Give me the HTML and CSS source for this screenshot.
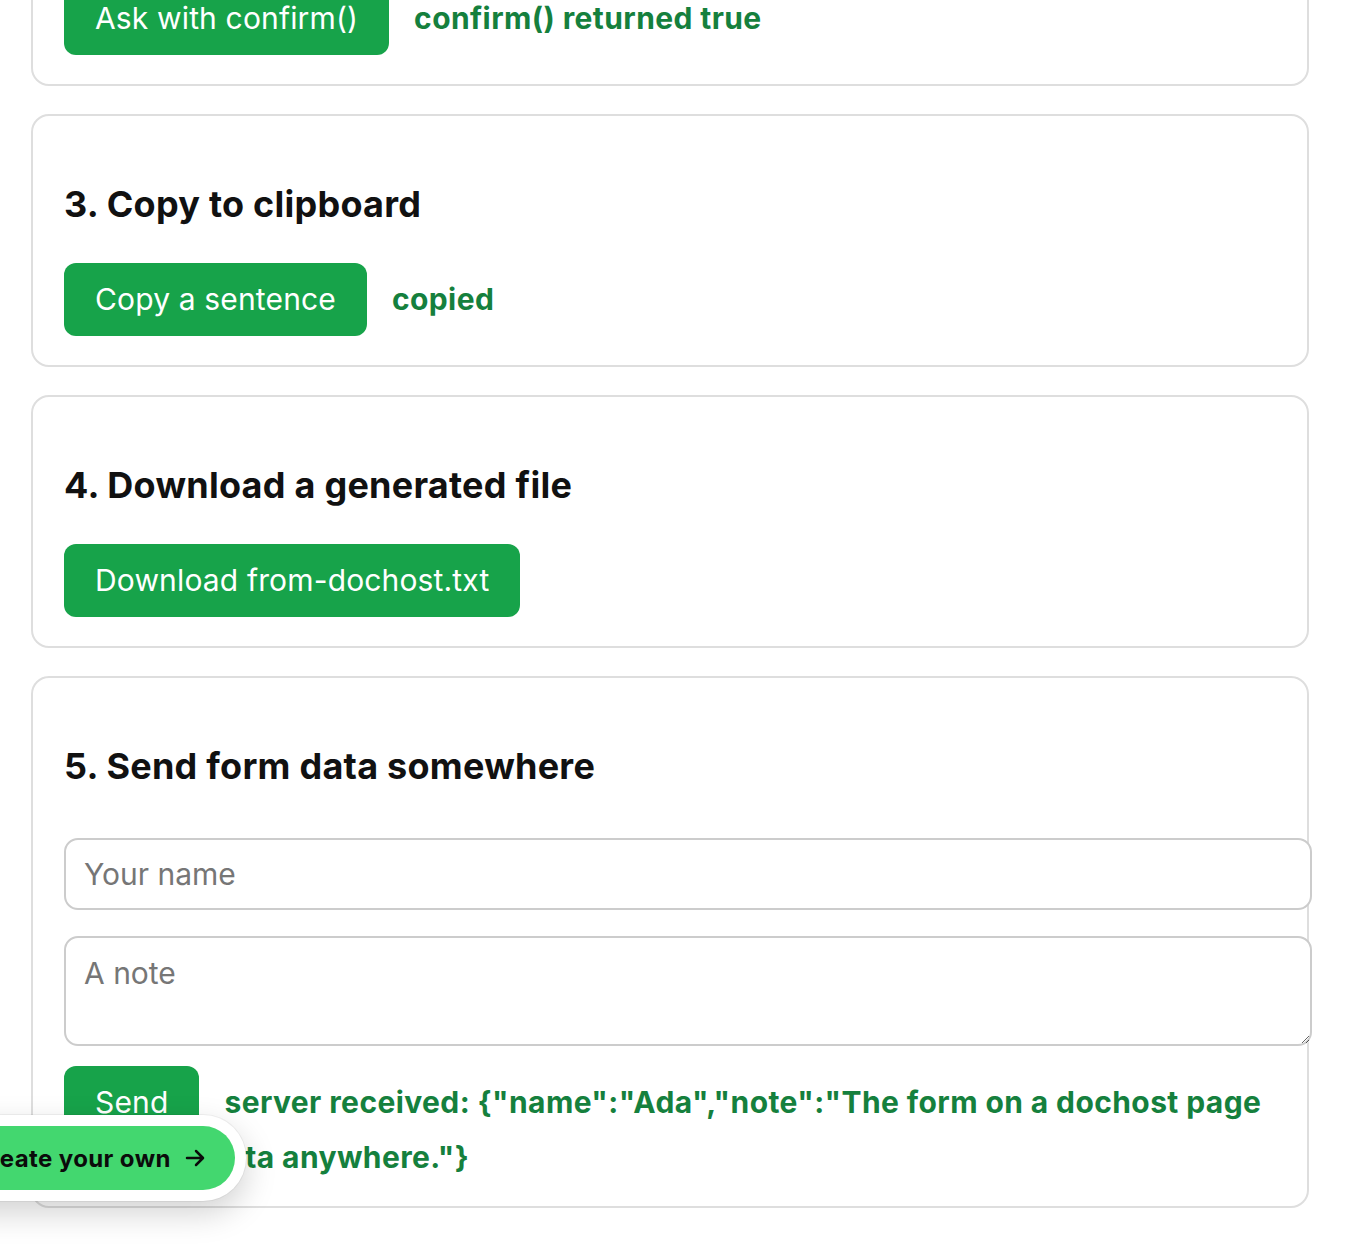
FILE: index.html
```html
<!DOCTYPE html>
<html lang="en">

<head>
  <meta charset="UTF-8" />
  <title>dochost demo</title>
  <link rel="stylesheet" href="styles.css">
</head>

<body>
  <div class="page">
    <h1>What a dochost page can do</h1>

    <!-- 1. alert -->
    <div class="card">
      <h2>1. Show an alert</h2>
      <div class="row"><button class="btn" id="alert-btn">Say hello with alert()</button><span class="status" id="alert-status"></span></div>
    </div>

    <!-- 2. confirm -->
    <div class="card">
      <h2>2. Ask before doing something</h2>
      <div class="row"><button class="btn" id="confirm-btn">Ask with confirm()</button><span class="status" id="confirm-status">confirm() returned true</span></div>
    </div>

    <!-- 3. clipboard -->
    <div class="card">
      <h2>3. Copy to clipboard</h2>
      <div class="row"><button class="btn" id="copy-btn">Copy a sentence</button><span class="status" id="copy-status">copied</span></div>
    </div>

    <!-- 4. download -->
    <div class="card">
      <h2>4. Download a generated file</h2>
      <div class="row"><button class="btn" id="download-btn">Download from-dochost.txt</button></div>
    </div>

    <!-- 5. form -->
    <div class="card card-form">
      <h2>5. Send form data somewhere</h2>
      <form class="form" id="send-form">
        <input class="field" type="text" name="name" placeholder="Your name" />
        <textarea class="field" name="note" rows="2" placeholder="A note"></textarea>
        <div class="row"><button class="btn" type="submit">Send</button><span class="status" id="send-status">server received: {"name":"Ada","note":"The form on a dochost page can send data anywhere."}</span></div>
      </form>
    </div>
  </div>

  <a class="cta" href="#">
    <span class="cta-pill">Create your own
      <svg width="24" height="24" viewBox="0 0 24 24" fill="none" stroke="currentColor" stroke-width="2.5" stroke-linecap="round" stroke-linejoin="round"><path d="M4 12h15M13 5l7 7-7 7" /></svg>
    </span>
  </a>

<script>
  // 页面停在底部, 看到最后几个例子
  window.scrollTo(0, document.documentElement.scrollHeight);

  document.querySelector('#send-form').onsubmit = function(e) {
    e.preventDefault();
  }
</script>
</body>

</html>
```

FILE: styles.css
```css
body {
    margin: 0;
    padding: 0;
    background-color: #fff;
    color: #111;
    font-family: Inter, "Noto Sans", sans-serif;
  }

  .page {
    padding: 32px 51px 42px 31px;
  }

  h1 {
    font-size: 44px;
    margin: 20px 0 40px;
  }

  .card {
    border: 2px solid #dedede;
    border-radius: 18px;
    padding: 30px 31px 29px;
    margin-bottom: 28px;
    background-color: #fff;
  }

  .card:last-child {
    margin-bottom: 0;
  }

  .card-form {
    padding-bottom: 31px;
  }

  .card h2 {
    font-size: 36px;
    line-height: 44px;
    font-weight: 700;
    letter-spacing: 0.25px;
    margin: 36px 0 37px;
  }

  .row {
    font-size: 30px;
    line-height: 36px;
  }

  .btn {
    display: inline-block;
    font-family: inherit;
    font-size: 30px;
    line-height: 37px;
    letter-spacing: 0.15px;
    padding: 18px 31px;
    border: none;
    border-radius: 12px;
    background-color: #17a34a;
    color: #fff;
    cursor: pointer;
  }

  .status {
    margin-left: 25px;
    font-weight: 700;
    letter-spacing: 0.4px;
    color: #15803d;
  }

  .form {
    margin-top: 50px;
  }

  .form .field {
    display: block;
    width: 100%;
    margin: 0 0 26px;
    padding: 16px 14px 16px 18px;
    border: 2px solid #ccc;
    border-radius: 14px;
    font-family: inherit;
    font-size: 30px;
    line-height: 36px;
    color: #111;
    outline: none;
  }

  .form textarea.field {
    padding-top: 17px;
    padding-bottom: 17px;
    margin-bottom: 20px;
  }

  .form .field::placeholder {
    color: #767676;
  }

  .cta {
    position: fixed;
    left: -67px;
    bottom: 49px;
    padding: 11px;
    border-radius: 999px;
    background-color: #fff;
    box-shadow: 0 12px 32px rgba(0, 0, 0, 0.18), 0 0 0 1px rgba(0, 0, 0, 0.05);
    text-decoration: none;
  }

  .cta-pill {
    display: flex;
    align-items: center;
    gap: 12px;
    height: 64px;
    padding: 0 28px;
    border-radius: 999px;
    background-color: #43d76f;
    color: #0b0b0b;
    font-size: 24px;
    font-weight: 700;
    letter-spacing: 0.4px;
  }
```
